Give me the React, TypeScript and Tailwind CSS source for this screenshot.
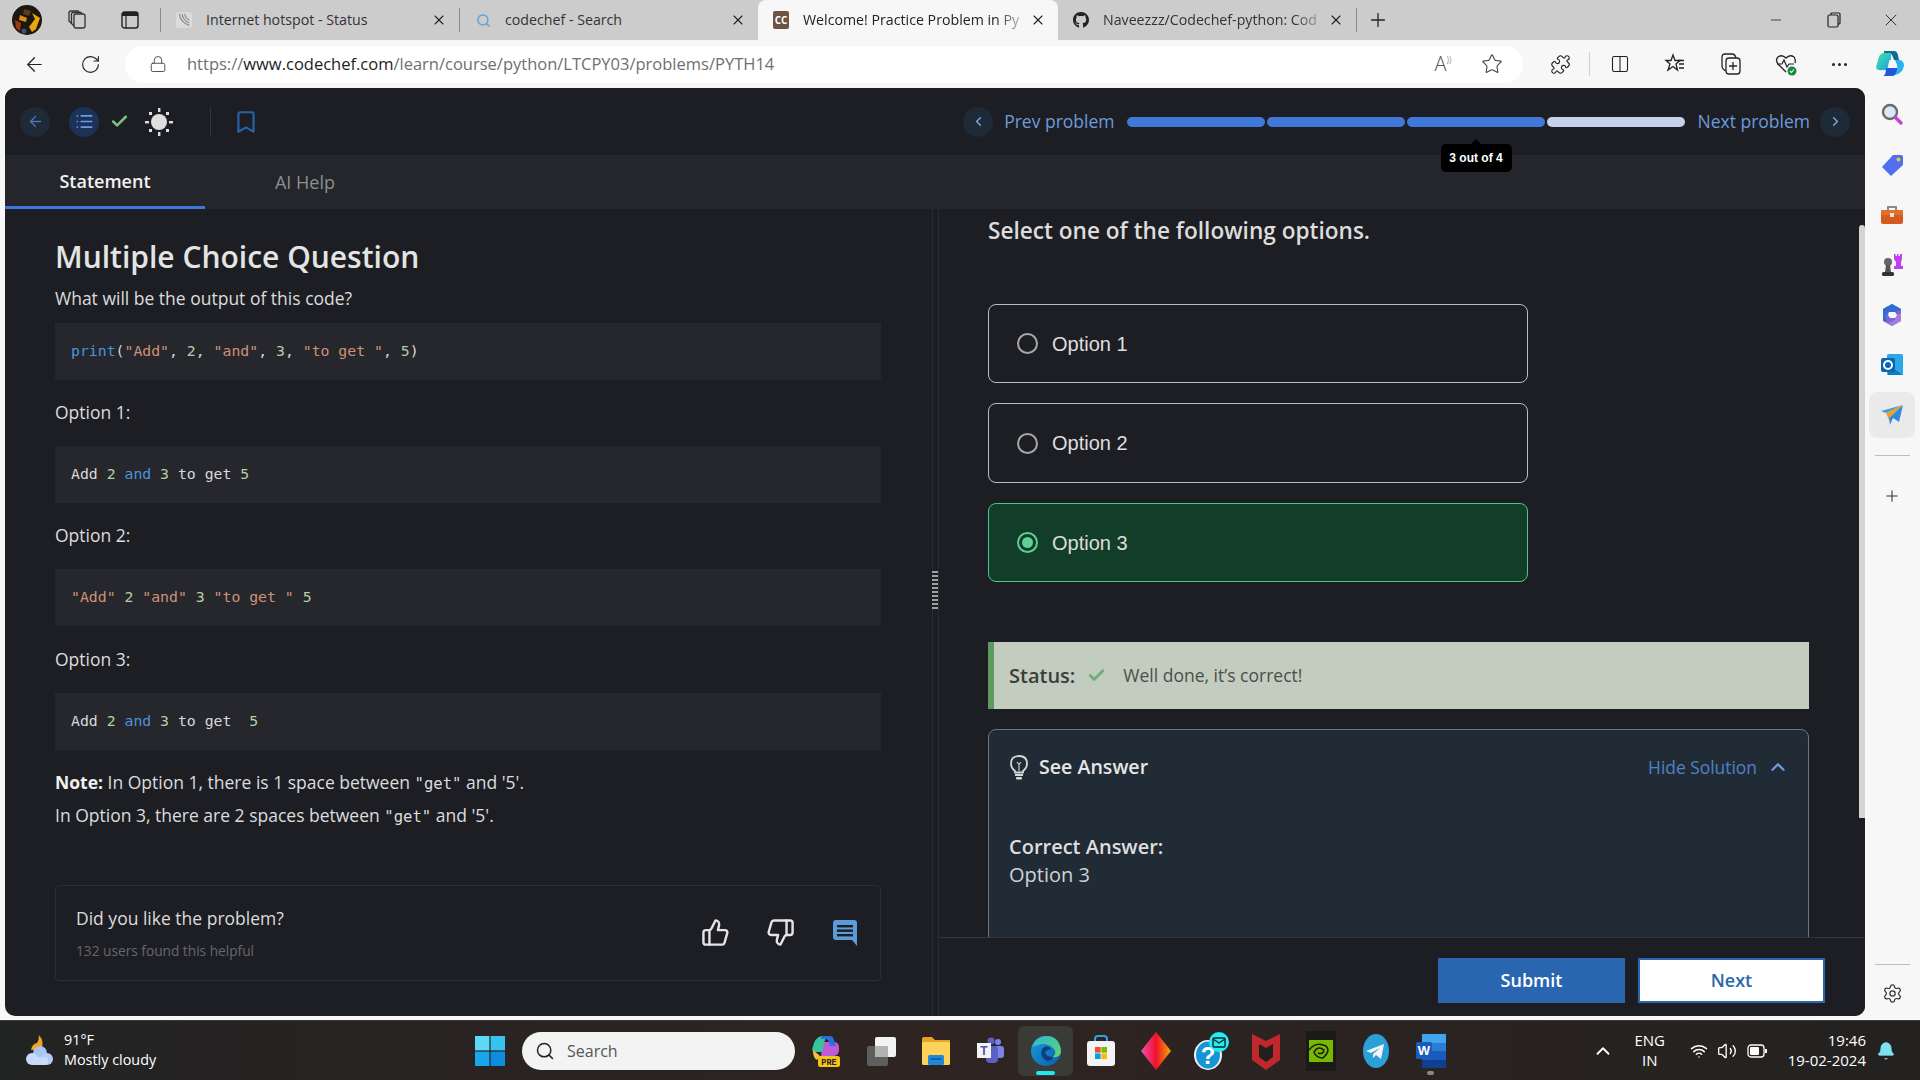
import React from 'react'
import {
  ArrowLeft,
  Bell,
  Bookmark,
  Check,
  ChevronLeft,
  ChevronRight,
  ChevronUp,
  Columns2,
  List,
  Lock,
  Minus,
  Plus,
  Puzzle,
  RotateCw,
  Search,
  Settings,
  Star,
  ThumbsDown,
  ThumbsUp,
  Volume2,
  Wifi,
  X,
} from 'lucide-react'
import { FaGithub } from 'react-icons/fa'

const sans = { fontFamily: '"Open Sans", "Noto Sans", sans-serif' }

const Tab: React.FC<{ icon: React.ReactNode; title: string; active?: boolean; width: string; fade?: boolean }> = ({
  icon,
  title,
  active,
  width,
  fade,
}) => (
  <div
    className={`flex items-center h-10 shrink-0 pl-[15px] pr-[12px] ${width} ${
      active ? 'bg-[#f7f7f7] rounded-t-lg' : ''
    }`}
  >
    <div className="w-4 h-4 flex items-center justify-center shrink-0">{icon}</div>
    <div
      className={`ml-[14px] flex-1 whitespace-nowrap text-[14.2px] ${active ? 'text-[#222]' : 'text-[#333]'} ${
        fade ? 'mask-r-from-85% mask-r-to-100%' : ''
      }`}
    >
      {title}
    </div>
    <X size={16} strokeWidth={1.6} className="text-[#222] shrink-0" />
  </div>
)

const TabSep = () => <div className="w-px h-6 bg-[#8a8a8a] shrink-0" />

const TabStrip = () => (
  <div className="h-10 bg-[#cccccc] flex items-center shrink-0">
    <div className="w-[54px] flex justify-center">
      <svg width="30" height="30" viewBox="0 0 30 30">
        <circle cx="15" cy="15" r="15" fill="#1d1712" />
        <path d="M12 4 L19 6 L17 11 L11 9 Z" fill="#5b3a1d" />
        <path d="M20 8 L28 13 L24 24 L20 27 L17 22 L23 14 Z" fill="#eaa60f" />
        <path d="M8 10 L15 13 L14 17 L7 15 Z" fill="#d88f12" />
        <path d="M3 15 L9 18 L8 26 L4 23 Z" fill="#9c3a16" />
        <circle cx="12" cy="26" r="2.5" fill="#3b4f78" />
      </svg>
    </div>
    <div className="w-[46px] flex justify-center">
      <svg width="22" height="22" viewBox="0 0 22 22" fill="none" stroke="#333" strokeWidth="1.3">
        <rect x="8" y="5" width="11" height="14" rx="2" />
        <path d="M8 17 L5.5 14.5 V5 Q5.5 3.5 7 3.5 H15 L16 5" />
        <path d="M5.5 14.5 L3 12 V4 Q3 2 5 2 H12 L13.5 3.5" />
      </svg>
    </div>
    <div className="w-[60px] flex justify-center">
      <svg width="18" height="18" viewBox="0 0 18 18" fill="none">
        <rect x="1" y="1" width="16" height="16" rx="2.5" stroke="#222" strokeWidth="1.4" />
        <path d="M1 3.5 Q1 1 3.5 1 H14.5 Q17 1 17 3.5 V5 H1 Z" fill="#222" />
        <path d="M5 5 V17" stroke="#222" strokeWidth="1.2" />
      </svg>
    </div>
    <TabSep />
    <Tab
      width="w-[298px]"
      title="Internet hotspot - Status"
      icon={
        <svg width="18" height="18" viewBox="0 0 18 18" fill="none" stroke="#8c8c8c" strokeWidth="1.3">
          <rect x="0" y="0" width="18" height="18" rx="3" fill="#dcdcdc" stroke="none" />
          <path d="M4 2 Q4 11 15 15" />
          <path d="M7 2 Q7 9 15 12" />
          <path d="M10 2 Q10 7 15 9" />
        </svg>
      }
    />
    <TabSep />
    <Tab
      width="w-[298px]"
      title="codechef - Search"
      icon={<Search size={15} strokeWidth={2.4} className="text-[#6d9fd6]" />}
    />
    <Tab
      active
      fade
      width="w-[300px]"
      title="Welcome! Practice Problem in Py"
      icon={
        <div className="w-[18px] h-[18px] bg-[#6b5444] rounded-[2px] text-white text-[10px] font-bold flex items-center justify-center">
          CC
        </div>
      }
    />
    <Tab
      fade
      width="w-[298px]"
      title="Naveezzz/Codechef-python: Cod"
      icon={<FaGithub size={20} className="text-[#222]" />}
    />
    <TabSep />
    <div className="w-[42px] flex justify-center">
      <Plus size={22} strokeWidth={1.4} className="text-[#222]" />
    </div>
    <div className="flex-1" />
    <div className="flex items-center text-[#222] pr-px">
      <div className="w-[58px] flex justify-center">
        <Minus size={16} strokeWidth={1.2} />
      </div>
      <div className="w-[58px] flex justify-center">
        <svg width="14" height="16" viewBox="0 0 14 16" fill="none" stroke="#222" strokeWidth="1.2">
          <rect x="1" y="3" width="10" height="12" rx="1.5" />
          <path d="M4 3 V2 Q4 1 5 1 H12 Q13 1 13 2 V11 Q13 12 12 12 H11" />
        </svg>
      </div>
      <div className="w-[56px] flex justify-center">
        <X size={20} strokeWidth={1.1} />
      </div>
    </div>
  </div>
)

const ToolBtn: React.FC<{ w: string; children: React.ReactNode }> = ({ w, children }) => (
  <div className={`${w} flex justify-center items-center shrink-0 text-[#222]`}>{children}</div>
)

const Toolbar = () => (
  <div className="h-12 bg-[#f7f7f7] flex items-center shrink-0">
    <ToolBtn w="w-[68px]">
      <ArrowLeft size={23} strokeWidth={1.3} />
    </ToolBtn>
    <ToolBtn w="w-[44px]">
      <RotateCw size={21} strokeWidth={1.3} />
    </ToolBtn>
    <div className="ml-[13px] w-[1398px] h-[37px] shrink-0 bg-white rounded-full flex items-center">
      <div className="w-[62px] pl-[3px] flex justify-center text-[#444]">
        <Lock size={18} strokeWidth={1.2} />
      </div>
      <div className="text-[16.5px] text-[#6f6f6f] whitespace-nowrap">
        https://<span className="text-[#1c1c1c]">www.codechef.com</span>/learn/course/python/LTCPY03/problems/PYTH14
      </div>
      <div className="flex-1" />
      <div className="text-[#555] text-[20px] font-light w-[40px] text-center mr-[2px] leading-none">
        A<span className="text-[9px] align-super">))</span>
      </div>
      <div className="w-[58px] pr-[4px] flex justify-center text-[#444]">
        <Star size={22} strokeWidth={1.2} />
      </div>
    </div>
    <ToolBtn w="w-[74px]">
      <Puzzle size={21} strokeWidth={1.3} />
    </ToolBtn>
    <div className="w-px h-6 bg-[#cfcfcf] -ml-[8px] mr-[8px]" />
    <ToolBtn w="w-[44px]">
      <Columns2 size={20} strokeWidth={1.3} />
    </ToolBtn>
    <ToolBtn w="w-[66px]">
      <svg width="22" height="22" viewBox="0 0 22 22" fill="none" stroke="#222" strokeWidth="1.3">
        <path d="M9 2 L11 7.5 H16 L12 11 L13.5 17 L9 13.5 L4 17 L6 11 L2 7.5 H7 Z" />
        <path d="M14 7.5 H20 M15 11 H20 M15 15 H20" />
      </svg>
    </ToolBtn>
    <ToolBtn w="w-[46px]">
      <svg width="22" height="24" viewBox="0 0 22 24" fill="none" stroke="#222" strokeWidth="1.3">
        <rect x="6" y="6" width="14" height="16" rx="3" />
        <path d="M6 19 Q2 17 2 14 V5 Q2 2 5 2 H12 Q15 2 16 6" />
        <path d="M13 10 V18 M9 14 H17" />
      </svg>
    </ToolBtn>
    <ToolBtn w="w-[64px]">
      <svg width="24" height="24" viewBox="0 0 24 24" fill="none">
        <path d="M12 20 L4 12 Q1 8 4 5 Q8 2 12 6 Q16 2 20 5 Q22 8 21 11" stroke="#222" strokeWidth="1.3" />
        <path d="M3 12 H8 L10 8 L13 15 L15 12 H20" stroke="#222" strokeWidth="1.2" />
        <circle cx="18" cy="19" r="4.5" fill="#138a3f" />
        <path d="M16 19 L17.5 20.5 L20 17.5" stroke="#fff" strokeWidth="1.1" />
      </svg>
    </ToolBtn>
    <ToolBtn w="w-[42px]">
      <span className="flex gap-[3px]">
        <span className="w-[3px] h-[3px] rounded-full bg-[#222]" />
        <span className="w-[3px] h-[3px] rounded-full bg-[#222]" />
        <span className="w-[3px] h-[3px] rounded-full bg-[#222]" />
      </span>
    </ToolBtn>
    <ToolBtn w="w-[60px]">
      <svg width="30" height="30" viewBox="0 0 30 30">
        <defs>
          <linearGradient id="cp2" x1="0" y1="0" x2="1" y2="1">
            <stop offset="0" stopColor="#46e6a8" />
            <stop offset="1" stopColor="#1a9fe0" />
          </linearGradient>
        </defs>
        <path d="M8 4 Q4 5 3 11 L1 18 Q2 22 7 21 H12 L14.5 11 H16 L16 5 Q13 3 8 4 Z" fill="url(#cp2)" />
        <path d="M9 2 H19 Q22 2 23 6 L24 11 H19 L17 6 Q16 4 14 4 H9 Z" fill="#0f6d8f" />
        <path d="M8 27 H17 Q21 27 23 21 L24.5 19 L11 19 Q11 26 8 27 Z" fill="#1f5bd8" />
        <path d="M20 11 H25 Q29 12 29 17 Q27 25 20 26 Q23 20 22 16 Z" fill="#27b4ee" />
      </svg>
    </ToolBtn>
  </div>
)

const CircleBtn: React.FC<{ bg: string; children: React.ReactNode }> = ({ bg, children }) => (
  <div className={`w-[30px] h-[30px] rounded-full flex items-center justify-center shrink-0 ${bg}`}>{children}</div>
)

const ProblemHeader = () => (
  <div className="h-[68px] shrink-0 bg-[#1d1e23] border-b border-[#202b3c] flex items-center">
    <div className="ml-[15px]">
      <CircleBtn bg="bg-[#1f2a38]">
        <ArrowLeft size={17} strokeWidth={1.8} className="text-[#4a78b4]" />
      </CircleBtn>
    </div>
    <div className="ml-[19px]">
      <CircleBtn bg="bg-[#1c3257]">
        <List size={19} strokeWidth={2.2} className="text-[#6a9be8]" />
      </CircleBtn>
    </div>
    <Check size={19} strokeWidth={3.2} className="ml-[11px] text-[#79c27a]" />
    <svg width="30" height="30" viewBox="0 0 30 30" className="ml-[15px]" fill="#dedede">
      <circle cx="15" cy="15" r="8" />
      <rect x="14" y="1" width="2.4" height="4" />
      <rect x="14" y="25" width="2.4" height="4" />
      <rect x="1" y="14" width="4" height="2.4" />
      <rect x="25" y="14" width="4" height="2.4" />
      <rect x="5" y="5" width="3" height="3" />
      <rect x="22" y="5" width="3" height="3" />
      <rect x="5" y="22" width="3" height="3" />
      <rect x="22" y="22" width="3" height="3" />
    </svg>
    <div className="ml-[36px] w-px h-[30px] bg-[#33353b]" />
    <Bookmark size={26} strokeWidth={2} className="ml-[22px] text-[#2563a8]" />
    <div className="flex-1" />
    <CircleBtn bg="bg-[#1f2a38]">
      <ChevronLeft size={15} strokeWidth={2.4} className="text-[#7ea6dc]" />
    </CircleBtn>
    <div className="ml-[11px] text-[17.5px] text-[#6b9bdc] whitespace-nowrap">Prev problem</div>
    <div className="relative ml-[12px] flex gap-[2px]">
      <div className="w-[138px] h-[10px] rounded-full bg-[#3f78d8]" />
      <div className="w-[138px] h-[10px] rounded-full bg-[#3f78d8]" />
      <div className="w-[138px] h-[10px] rounded-full bg-[#3f78d8]" />
      <div className="w-[138px] h-[10px] rounded-full bg-[#c5d2ea]" />
      <div
        className="absolute left-[314px] top-[27px] w-[71px] h-[28px] bg-black rounded-[5px] text-white text-[12px] font-bold flex items-center justify-center"
        style={{ fontFamily: '"Liberation Sans", sans-serif' }}
      >
        <div className="absolute -top-[5px] left-[30px] w-0 h-0 border-x-[5px] border-x-transparent border-b-[5px] border-b-black" />
        3 out of 4
      </div>
    </div>
    <div className="ml-[13px] text-[17.5px] text-[#6b9bdc] whitespace-nowrap">Next problem</div>
    <div className="ml-[10px] mr-[15px]">
      <CircleBtn bg="bg-[#1f2a38]">
        <ChevronRight size={15} strokeWidth={2.4} className="text-[#7ea6dc]" />
      </CircleBtn>
    </div>
  </div>
)

const ProblemTabs = () => (
  <div className="h-[53px] shrink-0 bg-[#25262b] flex">
    <div className="w-[200px] h-[53px] border-b-[3px] border-[#3f78d8] flex items-center justify-center text-[18px] font-semibold text-[#f2f2f2]">
      Statement
    </div>
    <div className="w-[200px] h-[53px] flex items-center justify-center text-[18px] text-[#8e8f93]">AI Help</div>
  </div>
)

type Tok = [string, string]
const C = { fn: '#4c93dd', s: '#ce9178', n: '#b5cea8', p: '#d8d8d8', k: '#4c93dd' }

const CodeBox: React.FC<{ toks: Tok[] }> = ({ toks }) => (
  <div className="h-[57px] bg-[#26272c] flex items-center px-4">
    <code className="text-[14.8px] whitespace-pre" style={{ fontFamily: '"DejaVu Sans Mono", monospace' }}>
      {toks.map(([t, c], i) => (
        <span key={i} style={{ color: c }}>
          {t}
        </span>
      ))}
    </code>
  </div>
)

const LeftPane = () => (
  <div className="w-[927px] shrink-0 pl-[50px] pr-[51px] pt-[28px]">
    <h1 className="text-[30px] leading-[40px] font-semibold text-[#e4e4e4]">Multiple Choice Question</h1>
    <p className="mt-2 text-[17.5px] leading-[26px] text-[#dcdcdc]">What will be the output of this code?</p>
    <div className="mt-3">
      <CodeBox
        toks={[
          ['print', C.fn],
          ['(', C.p],
          ['"Add"', C.s],
          [', ', C.p],
          ['2', C.n],
          [', ', C.p],
          ['"and"', C.s],
          [', ', C.p],
          ['3', C.n],
          [', ', C.p],
          ['"to get "', C.s],
          [', ', C.p],
          ['5', C.n],
          [')', C.p],
        ]}
      />
    </div>
    <p className="mt-[19px] text-[17.5px] leading-[26px] text-[#dcdcdc]">Option 1:</p>
    <div className="mt-[21px]">
      <CodeBox
        toks={[
          ['Add ', C.p],
          ['2 ', C.n],
          ['and ', C.k],
          ['3 ', C.n],
          ['to get ', C.p],
          ['5', C.n],
        ]}
      />
    </div>
    <p className="mt-[19px] text-[17.5px] leading-[26px] text-[#dcdcdc]">Option 2:</p>
    <div className="mt-[21px]">
      <CodeBox
        toks={[
          ['"Add" ', C.s],
          ['2 ', C.n],
          ['"and" ', C.s],
          ['3 ', C.n],
          ['"to get " ', C.s],
          ['5', C.n],
        ]}
      />
    </div>
    <p className="mt-[20px] text-[17.5px] leading-[26px] text-[#dcdcdc]">Option 3:</p>
    <div className="mt-[21px]">
      <CodeBox
        toks={[
          ['Add ', C.p],
          ['2 ', C.n],
          ['and ', C.k],
          ['3 ', C.n],
          ['to get  ', C.p],
          ['5', C.n],
        ]}
      />
    </div>
    <p className="mt-[19px] text-[17.5px] leading-[26px] text-[#dcdcdc]">
      <b className="font-bold text-[#f0f0f0]">Note:</b> In Option 1, there is 1 space between{' '}
      <code className="text-[15.6px]" style={{ fontFamily: '"DejaVu Sans Mono", monospace' }}>
        "get"
      </code>{' '}
      and '5'.
    </p>
    <p className="mt-[5px] text-[17.5px] leading-[26px] text-[#dcdcdc]">
      In Option 3, there are 2 spaces between{' '}
      <code className="text-[15.6px]" style={{ fontFamily: '"DejaVu Sans Mono", monospace' }}>
        "get"
      </code>{' '}
      and '5'.
    </p>
    <div className="mt-[55px] h-[96px] border border-[#2c2e35] rounded-[4px] flex items-center pl-[20px]">
      <div className="flex-1 -mt-px">
        <div className="text-[17.5px] leading-[26px] text-[#dcdcdc]">Did you like the problem?</div>
        <div className="mt-[10px] text-[13.7px] leading-[20px] text-[#66676b]">132 users found this helpful</div>
      </div>
      <ThumbsUp size={29} strokeWidth={2} className="-mt-[2px] text-[#e4e4e4]" />
      <ThumbsDown size={29} strokeWidth={2} className="-mt-[2px] ml-[36px] text-[#e4e4e4]" />
      <svg width="28" height="28" viewBox="0 0 28 28" className="ml-[36px] mr-[21px]">
        <path d="M2 4 Q2 1 5 1 H23 Q26 1 26 4 V27 L21 21 H5 Q2 21 2 18 Z" fill="#5b9bd8" />
        <rect x="6" y="6" width="16" height="2.4" fill="#1d1e23" />
        <rect x="6" y="10.5" width="16" height="2.4" fill="#1d1e23" />
        <rect x="6" y="15" width="16" height="2.4" fill="#1d1e23" />
      </svg>
    </div>
  </div>
)

const OptionCard: React.FC<{ label: string; selected?: boolean; mt: string; h: string }> = ({
  label,
  selected,
  mt,
  h,
}) => (
  <div
    className={`w-[540px] ${h} ${mt} rounded-[8px] border flex items-center pl-[28px] ${
      selected ? 'bg-[#123e29] border-[#4fc685]' : 'border-[#b8bdc2]'
    }`}
  >
    <div
      className={`w-[21px] h-[21px] rounded-full border-2 flex items-center justify-center ${
        selected ? 'border-[#5fcf95]' : 'border-[#a8a8a8]'
      }`}
    >
      {selected && <div className="w-[11px] h-[11px] rounded-full bg-[#5fcf95]" />}
    </div>
    <span
      className="ml-[14px] text-[20px] text-[#dedede]"
      style={{ fontFamily: '"Liberation Sans", sans-serif' }}
    >
      {label}
    </span>
  </div>
)

const RightPane = () => (
  <div className="flex-1 flex flex-col min-w-0 relative">
    <div className="flex-1 overflow-hidden pl-[49px] pr-[56px] pt-[5px] min-h-0">
      <h2 className="text-[22.6px] leading-[34px] font-semibold text-[#dcdcdc]">Select one of the following options.</h2>
      <OptionCard label="Option 1" mt="mt-[56px]" h="h-[79px]" />
      <OptionCard label="Option 2" mt="mt-[20px]" h="h-[80px]" />
      <OptionCard label="Option 3" selected mt="mt-[20px]" h="h-[79px]" />
      <div className="mt-[60px] h-[67px] bg-[#c2ccbf] border-l-[6px] border-[#5c9a5e] flex items-center pl-[15px]">
        <span className="text-[20px] font-semibold text-[#3a3d3a]">Status:</span>
        <Check size={19} strokeWidth={3.4} className="ml-[12px] text-[#6fae72]" />
        <span className="ml-[17px] text-[17.5px] text-[#4a4f4c]">Well done, it’s correct!</span>
      </div>
      <div className="mt-[20px] h-[300px] bg-[#212b36] border border-[#6d7680] rounded-[8px] pt-[20px] pl-[20px] pr-[19px]">
        <div className="flex items-center h-[34px]">
          <svg width="20" height="26" viewBox="0 0 20 26" fill="none">
            <path
              d="M6 17 Q2 14 2 9.5 Q2 2 10 2 Q18 2 18 9.5 Q18 14 14 17 V18.5 H6 Z"
              stroke="#d8d8d8"
              strokeWidth="1.8"
            />
            <path d="M8 8 L10 10.5 L12 8 M10 10.5 V17" stroke="#d8d8d8" strokeWidth="1.1" />
            <rect x="6" y="20" width="8" height="2" fill="#d8d8d8" />
            <rect x="7" y="23" width="6" height="2.4" rx="1" fill="#d8d8d8" />
          </svg>
          <span className="ml-[10px] text-[19.6px] font-semibold text-[#e6e6e6]">See Answer</span>
          <div className="flex-1" />
          <span className="text-[17.4px] text-[#4f82c4]">Hide Solution</span>
          <ChevronUp size={22} strokeWidth={2.6} className="ml-[10px] text-[#6b9bdc]" />
        </div>
        <div className="mt-[49px] text-[20px] leading-[28px] font-semibold text-[#dedede]">Correct Answer:</div>
        <div className="text-[20px] leading-[28px] text-[#cfd2d6]">Option 3</div>
      </div>
    </div>
    <div className="h-[79px] shrink-0 border-t border-[#33363d] bg-[#1d1e23] flex justify-end pt-[20px] pr-[40px] gap-[13px]">
      <button className="w-[187px] h-[45px] bg-[#2a66b0] text-white text-[18px] font-semibold">Submit</button>
      <button className="w-[187px] h-[45px] bg-white border-2 border-[#2a66b0] text-[#2a66b0] text-[18px] font-semibold">
        Next
      </button>
    </div>
    <div className="absolute right-0 top-[16px] w-[6px] h-[593px] bg-[#d4d4d4] rounded-t-[3px]" />
  </div>
)

const Panel = () => (
  <div
    className="flex-1 flex flex-col bg-[#1d1e23] ml-[5px] mr-[1px] rounded-[10px] overflow-hidden min-w-0"
    style={sans}
  >
    <ProblemHeader />
    <ProblemTabs />
    <div className="flex-1 flex min-h-0">
      <LeftPane />
      <div className="relative w-[7px] shrink-0 border-x border-[#2a2c32]">
        <div className="absolute -left-px top-[362px] w-[6px] h-[38px] bg-[repeating-linear-gradient(to_bottom,#a0a0a0_0,#a0a0a0_2px,transparent_2px,transparent_4px)]" />
      </div>
      <RightPane />
    </div>
  </div>
)

const SideIcon: React.FC<{ active?: boolean; children: React.ReactNode }> = ({ active, children }) => (
  <div className={`w-[46px] h-[46px] flex items-center justify-center rounded-lg mb-[4px] ${active ? 'bg-[#eaeaea]' : ''}`}>
    {children}
  </div>
)

const Sidebar = () => (
  <div className="w-[54px] shrink-0 bg-[#f7f7f7] flex flex-col items-center pt-[4px] pr-[2px]">
    <SideIcon>
      <svg width="24" height="24" viewBox="0 0 24 24" fill="none" className="-mt-[2px]">
        <circle cx="10" cy="10" r="7" fill="#dbe9f6" stroke="#6b6b6b" strokeWidth="2.4" />
        <path d="M15.5 15.5 L21 21" stroke="#c542d8" strokeWidth="3.4" strokeLinecap="round" />
      </svg>
    </SideIcon>
    <SideIcon>
      <svg width="24" height="24" viewBox="0 0 24 24">
        <path d="M13 2 H21 Q23 2 23 4 V12 L11 23 L2 14 Z" fill="#4f6ff0" />
        <circle cx="18.5" cy="6.5" r="2" fill="#f4c430" />
      </svg>
    </SideIcon>
    <SideIcon>
      <svg width="24" height="24" viewBox="0 0 24 24" fill="none">
        <path d="M8 7 V4 H16 V7" stroke="#8a8a8a" strokeWidth="2" />
        <rect x="1" y="7" width="22" height="14" rx="2" fill="#d55a1e" />
        <rect x="1" y="7" width="22" height="5" rx="1" fill="#e4712b" />
        <rect x="10" y="10" width="4" height="4" fill="#e5e5e5" />
      </svg>
    </SideIcon>
    <SideIcon>
      <svg width="24" height="24" viewBox="0 0 24 24">
        <circle cx="8" cy="9" r="4" fill="#666" />
        <path d="M6 12 H10 L11 19 H5 Z" fill="#555" />
        <rect x="2" y="19" width="12" height="4" rx="1.5" fill="#333" />
        <path d="M14 1 H15.5 V3 H17 V1 H18.5 V3 H20 V1 H22 V6 L21 9 V13 H23 V16 H14 V13 H16 V9 L14 6 Z" fill="#c13ff0" />
      </svg>
    </SideIcon>
    <SideIcon>
      <svg width="24" height="24" viewBox="0 0 24 24">
        <path d="M12 1 L21 6 V18 L12 23 L3 18 V6 Z" fill="#7a63d2" />
        <path d="M3 6 L12 1 L21 6 L15 9 H9 L6 11 V18 L3 18 Z" fill="#2d6fd0" />
        <path d="M21 18 L12 23 L8 20 L15 17 V12 L21 10 Z" fill="#a67bdc" />
        <path d="M9 9 H15 L17 12 L15 15 H10 L8 12 Z" fill="#f7f7f7" />
      </svg>
    </SideIcon>
    <SideIcon>
      <svg width="24" height="24" viewBox="0 0 24 24">
        <rect x="7" y="1" width="16" height="21" rx="1.5" fill="#28a8ea" />
        <path d="M8 12 L23 22 H8 Z" fill="#0f7bc4" />
        <rect x="1" y="5" width="14" height="14" rx="2" fill="#0a64b4" />
        <circle cx="8" cy="12" r="4" fill="none" stroke="#fff" strokeWidth="2" />
      </svg>
    </SideIcon>
    <SideIcon active>
      <svg width="24" height="22" viewBox="0 0 24 22">
        <path d="M1 7 L23 1 L6 9 Z" fill="#3b9bea" />
        <path d="M6 9 L23 1 L10 13 L9 16 Z" fill="#f0a020" />
        <path d="M23 1 L19 18 L13 14 L10 21 L9 14 Z" fill="#2f8be0" />
      </svg>
    </SideIcon>
    <div className="w-[35px] h-px bg-[#bdbdbd] mt-[13px]" />
    <Plus size={18} strokeWidth={1.4} className="mt-[31px] text-[#333]" />
    <div className="flex-1" />
    <div className="w-[35px] h-px bg-[#bdbdbd]" />
    <Settings size={21} strokeWidth={1.4} className="mt-[18px] mb-[12px] text-[#333]" />
  </div>
)

const TaskIcon: React.FC<{ active?: boolean; dot?: boolean; children: React.ReactNode }> = ({ active, dot, children }) => (
  <div className={`relative w-[55px] h-[50px] flex items-center justify-center shrink-0 rounded-md ${active ? 'bg-[#3a3a36]' : ''}`}>
    {children}
    {active && <div className="absolute bottom-[1px] left-[18px] w-[19px] h-[4px] rounded-full bg-[#24e6f0]" />}
    {dot && <div className="absolute bottom-[1px] left-[24px] w-[7px] h-[4px] rounded-full bg-[#8a8a8a]" />}
  </div>
)

const Taskbar = () => (
  <div
    className="h-[60px] shrink-0 bg-linear-to-r from-[#222323] via-[#2f2422] to-[#232220] flex items-center text-white border-t border-[#3a3a3a]"
    style={sans}
  >
    <div className="w-[64px] flex justify-center pl-[20px] pr-[4px]">
      <svg width="34" height="34" viewBox="0 0 34 34">
        <path d="M16 1 Q22 8 18 16 H8 Q9 10 14 9 Q16 6 16 1 Z" fill="#f0a324" />
        <circle cx="17" cy="19" r="7" fill="#a9c3f2" />
        <circle cx="9" cy="25" r="6" fill="#c8dafa" />
        <circle cx="24" cy="25" r="6" fill="#b4cbf5" />
        <rect x="8" y="23" width="17" height="8" rx="3" fill="#c8dafa" />
      </svg>
    </div>
    <div className="w-[411px] shrink-0 text-[14.4px] leading-[20px] -mt-[2px]">
      <div>91°F</div>
      <div>Mostly cloudy</div>
    </div>
    <svg width="30" height="30" viewBox="0 0 30 30" className="shrink-0">
      <rect x="0" y="0" width="14.4" height="14.4" fill="#5dd8f5" />
      <rect x="15.6" y="0" width="14.4" height="14.4" fill="#36c3f0" />
      <rect x="0" y="15.6" width="14.4" height="14.4" fill="#1aa6ea" />
      <rect x="15.6" y="15.6" width="14.4" height="14.4" fill="#0c8ee0" />
    </svg>
    <div className="ml-[17px] w-[273px] h-[38px] rounded-full bg-[#f3f3f3] flex items-center pl-[13px] shrink-0">
      <Search size={20} strokeWidth={1.8} className="text-[#222]" />
      <span className="ml-[12px] text-[16px] text-[#555]">Search</span>
    </div>
    <div className="ml-[3px] flex items-center">
      <TaskIcon>
        <svg width="30" height="34" viewBox="0 0 30 34">
          <path d="M12 8 H24 Q29 9 28 17 Q27 22 22 22 H10 Z" fill="#c05bd6" />
          <path d="M10 2 H15 L11 18 H3 Q0 17 2 12 Q4 4 10 2 Z" fill="#35c79a" />
          <path d="M10 2 H19 Q22 2 23 6 L25 12 H19 L18 8 Q17 5 14 5 H10 Z" fill="#2a6fe0" />
          <path d="M2 16 L9 22 L6 26 Q2 24 2 16 Z" fill="#f6c23b" />
          <rect x="7" y="22" width="22" height="11" rx="2.5" fill="#f5c518" />
          <text x="18" y="31" fontSize="8.5" fontWeight="800" textAnchor="middle" fill="#222" fontFamily="Liberation Mono, monospace">
            PRE
          </text>
        </svg>
      </TaskIcon>
      <TaskIcon>
        <svg width="30" height="30" viewBox="0 0 30 30">
          <rect x="1" y="10" width="21" height="20" rx="2" fill="#5e5e5e" />
          <rect x="9" y="1" width="21" height="20" rx="2" fill="#f3f3f3" />
          <rect x="9" y="10" width="13" height="11" fill="#b3b3b3" />
        </svg>
      </TaskIcon>
      <TaskIcon>
        <svg width="30" height="30" viewBox="0 0 30 30">
          <path d="M1 3 Q1 1 3 1 H11 L14 4 H29 V10 H1 Z" fill="#e6a320" />
          <rect x="1" y="6" width="28" height="23" rx="1.5" fill="#fcd25b" />
          <rect x="7" y="19" width="16" height="10" rx="1.5" fill="#1e88d6" />
          <rect x="10" y="22" width="10" height="2" fill="#0f5fa8" />
        </svg>
      </TaskIcon>
      <TaskIcon>
        <svg width="28" height="28" viewBox="0 0 28 28">
          <circle cx="21" cy="5" r="3" fill="#7b83eb" />
          <circle cx="14" cy="4" r="3.6" fill="#5b5fc7" />
          <rect x="17" y="9" width="10" height="12" rx="3" fill="#7b83eb" />
          <rect x="9" y="9" width="12" height="17" rx="4" fill="#5b5fc7" />
          <rect x="0" y="6" width="14" height="15" fill="#f4f4f6" />
          <text x="7" y="18" fontSize="12" fontWeight="700" textAnchor="middle" fill="#4b53bc" fontFamily="Liberation Sans, sans-serif">
            T
          </text>
        </svg>
      </TaskIcon>
      <TaskIcon active>
        <svg width="32" height="32" viewBox="0 0 32 32">
          <defs>
            <linearGradient id="edgeA" x1="0" y1="0" x2="1" y2="1">
              <stop offset="0" stopColor="#1b9de2" />
              <stop offset="1" stopColor="#0d5ca8" />
            </linearGradient>
            <linearGradient id="edgeB" x1="0" y1="0" x2="1" y2="1">
              <stop offset="0" stopColor="#2cb8d8" />
              <stop offset="1" stopColor="#62d56a" />
            </linearGradient>
          </defs>
          <circle cx="16" cy="16" r="15" fill="url(#edgeA)" />
          <path d="M2 12 Q6 1 16 1 Q30 1 31 17 Q30 23 23 22 Q27 18 24 14 Q17 7 8 10 Q4 11 2 12 Z" fill="url(#edgeB)" />
          <path d="M23 22 Q17 22 15 18 Q17 13 21 15 Q18 8 12 14 Q9 22 17 26 Q22 26 23 22 Z" fill="#0b3f80" />
        </svg>
      </TaskIcon>
      <TaskIcon>
        <svg width="30" height="32" viewBox="0 0 30 32">
          <path d="M9 8 V4 Q9 1 12 1 H18 Q21 1 21 4 V8" fill="none" stroke="#2aa5e8" strokeWidth="2" />
          <rect x="1" y="6" width="28" height="25" rx="3" fill="#f3f3f3" />
          <rect x="9" y="12" width="5.6" height="5.6" fill="#f05022" />
          <rect x="15.4" y="12" width="5.6" height="5.6" fill="#7db900" />
          <rect x="9" y="18.4" width="5.6" height="5.6" fill="#00a3ee" />
          <rect x="15.4" y="18.4" width="5.6" height="5.6" fill="#ffb900" />
        </svg>
      </TaskIcon>
      <TaskIcon>
        <svg width="30" height="40" viewBox="0 0 30 40">
          <defs>
            <linearGradient id="dia" x1="0" y1="0" x2="1" y2="0">
              <stop offset="0" stopColor="#f050b0" />
              <stop offset="0.5" stopColor="#f0102a" />
              <stop offset="1" stopColor="#f8a800" />
            </linearGradient>
          </defs>
          <path d="M15 1 L30 20 L15 39 L0 20 Z" fill="url(#dia)" />
        </svg>
      </TaskIcon>
      <TaskIcon>
        <svg width="36" height="40" viewBox="0 0 36 40" className="ml-[3px]">
          <ellipse cx="14" cy="24" rx="14" ry="15" fill="#f3f3f3" />
          <ellipse cx="14" cy="24" rx="12" ry="13.5" fill="#1495d6" />
          <text x="14" y="33" fontSize="24" fontWeight="700" textAnchor="middle" fill="#fff" fontFamily="Liberation Sans, sans-serif">
            ?
          </text>
          <circle cx="25" cy="11" r="10" fill="#20eef0" />
          <rect x="19" y="7" width="12" height="9" rx="1" fill="none" stroke="#123" strokeWidth="1.4" />
          <path d="M19 8 L25 12 L31 8" fill="none" stroke="#123" strokeWidth="1.4" />
        </svg>
      </TaskIcon>
      <TaskIcon>
        <svg width="28" height="40" viewBox="0 0 28 40">
          <path d="M0 3 L14 10 L28 3 V29 L14 39 L0 29 Z" fill="#c0282e" />
          <path d="M7 13 L14 17 L21 13 V26 L14 31 L7 26 Z" fill="#231f1e" />
        </svg>
      </TaskIcon>
      <TaskIcon>
        <svg width="30" height="40" viewBox="0 0 30 40">
          <rect x="0" y="0" width="30" height="40" fill="#1a1a17" />
          <rect x="3" y="9" width="24" height="22" fill="#76b900" />
          <path d="M3 19 Q10 10 20 15 Q25 20 17 27 Q10 27 8 21 Q12 14 18 19 Q17 24 12 22" fill="none" stroke="#1a1a17" strokeWidth="1.5" />
        </svg>
      </TaskIcon>
      <TaskIcon>
        <svg width="28" height="36" viewBox="0 0 28 36">
          <ellipse cx="14" cy="18" rx="13" ry="17" fill="#2a9fd8" />
          <path d="M4 18 L22 11 L19 26 L14 22 L11 25 L11 21 L18 15 L9 20 Z" fill="#f4f4f4" />
        </svg>
      </TaskIcon>
      <TaskIcon dot>
        <svg width="30" height="36" viewBox="0 0 30 36">
          <rect x="6" y="1" width="24" height="34" rx="1.5" fill="#2b7cd3" />
          <rect x="6" y="1" width="24" height="9" fill="#41a5ee" />
          <rect x="6" y="18" width="24" height="9" fill="#185abd" />
          <rect x="6" y="27" width="24" height="8" fill="#103f91" />
          <rect x="0" y="9" width="16" height="17" rx="1.5" fill="#1a5bbf" />
          <text x="8" y="22" fontSize="13" fontWeight="700" textAnchor="middle" fill="#fff" fontFamily="Liberation Sans, sans-serif">
            W
          </text>
        </svg>
      </TaskIcon>
    </div>
    <div className="flex-1" />
    <ChevronUp size={22} strokeWidth={2} className="mr-[17px]" />
    <div className="text-[15px] leading-[20px] text-center w-[38px] -mt-[2px]">
      <div>ENG</div>
      <div>IN</div>
    </div>
    <Wifi size={18} strokeWidth={2} className="ml-[21px]" />
    <Volume2 size={20} strokeWidth={1.6} className="ml-[9px]" />
    <svg width="20" height="14" viewBox="0 0 20 14" className="ml-[10px]" fill="none">
      <rect x="1" y="1" width="16" height="12" rx="3" stroke="#fff" strokeWidth="1.3" />
      <rect x="3" y="3" width="9" height="8" rx="1" fill="#fff" />
      <rect x="18" y="5" width="2" height="4" fill="#fff" />
    </svg>
    <div className="ml-[21px] text-[15px] leading-[20px] text-right -mt-[2px]">
      <div>19:46</div>
      <div>19-02-2024</div>
    </div>
    <Bell size={20} fill="#7fe0ee" strokeWidth={1} className="ml-[10px] mr-[24px] text-[#7fe0ee]" />
  </div>
)

export default function App() {
  return (
    <div className="w-[1920px] h-[1080px] flex flex-col bg-[#f7f7f7] overflow-hidden" style={sans}>
      <TabStrip />
      <Toolbar />
      <div className="h-[932px] shrink-0 flex pb-[4px]">
        <Panel />
        <Sidebar />
      </div>
      <Taskbar />
    </div>
  )
}
